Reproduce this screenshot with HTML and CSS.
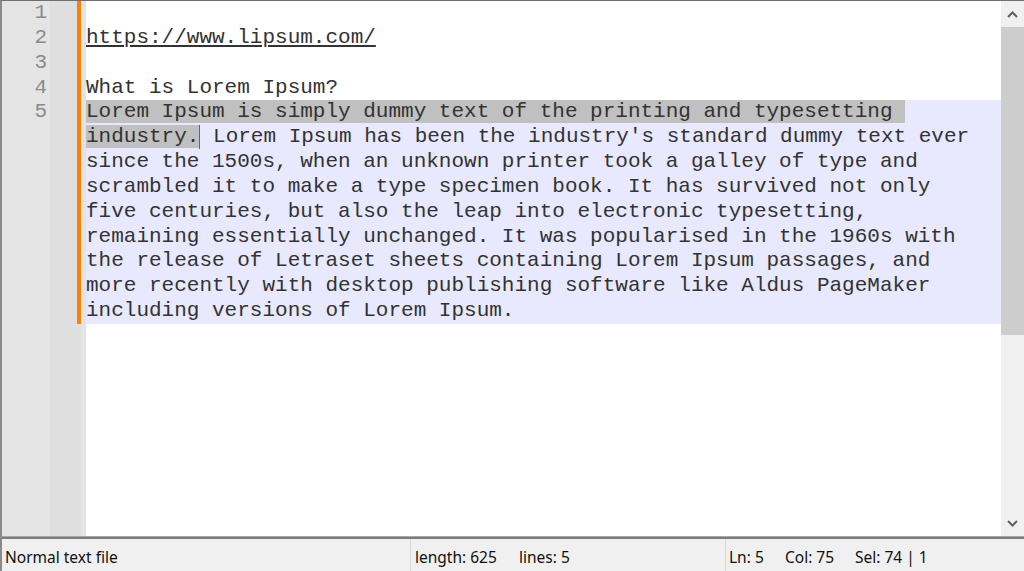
FILE: index.html
```html
<!DOCTYPE html>
<html lang="en">

<head>
    <meta charset="UTF-8">
    <meta name="viewport" content="width=device-width, initial-scale=1.0">
    <title>new 1 - Notepad++</title>
    <link rel="stylesheet" href="styles.css">
</head>

<body>
    <div class="window">
        <div class="editor">
            <div class="lines">
                <div class="row">
                    <div class="num">1</div>
                    <div class="fold"></div>
                    <div class="mark changed"></div>
                    <div class="pad"></div>
                    <div class="txt"><div class="wrap"> </div></div>
                </div>
                <div class="row">
                    <div class="num">2</div>
                    <div class="fold"></div>
                    <div class="mark changed"></div>
                    <div class="pad"></div>
                    <div class="txt"><div class="wrap"><span class="link">https://www.lipsum.com/</span></div></div>
                </div>
                <div class="row">
                    <div class="num">3</div>
                    <div class="fold"></div>
                    <div class="mark changed"></div>
                    <div class="pad"></div>
                    <div class="txt"><div class="wrap"> </div></div>
                </div>
                <div class="row">
                    <div class="num">4</div>
                    <div class="fold"></div>
                    <div class="mark changed"></div>
                    <div class="pad"></div>
                    <div class="txt"><div class="wrap">What is Lorem Ipsum?</div></div>
                </div>
                <div class="row">
                    <div class="num">5</div>
                    <div class="fold"></div>
                    <div class="mark changed"></div>
                    <div class="pad"></div>
                    <!-- wrapped line, one div per visual line -->
                    <div class="txt current">
                        <div class="wrap"><span class="sel">Lorem Ipsum is simply dummy text of the printing and typesetting </span></div>
                        <div class="wrap"><span class="sel">industry.</span><span class="caret"></span> Lorem Ipsum has been the industry's standard dummy text ever</div>
                        <div class="wrap">since the 1500s, when an unknown printer took a galley of type and</div>
                        <div class="wrap">scrambled it to make a type specimen book. It has survived not only</div>
                        <div class="wrap">five centuries, but also the leap into electronic typesetting,</div>
                        <div class="wrap">remaining essentially unchanged. It was popularised in the 1960s with</div>
                        <div class="wrap">the release of Letraset sheets containing Lorem Ipsum passages, and</div>
                        <div class="wrap">more recently with desktop publishing software like Aldus PageMaker</div>
                        <div class="wrap">including versions of Lorem Ipsum.</div>
                    </div>
                </div>
                <div class="row filler">
                    <div class="num"></div>
                    <div class="fold"></div>
                    <div class="mark"></div>
                    <div class="pad"></div>
                    <div class="txt"></div>
                </div>
            </div>
            <div class="vscroll">
                <div class="arrow">
                    <svg width="11" height="7" viewBox="0 0 11 7"><path d="M1 6 L5.5 1.5 L10 6" fill="none" stroke="#606060" stroke-width="2"/></svg>
                </div>
                <div class="thumb"></div>
                <div class="track"></div>
                <div class="arrow">
                    <svg width="11" height="7" viewBox="0 0 11 7"><path d="M1 1 L5.5 5.5 L10 1" fill="none" stroke="#606060" stroke-width="2"/></svg>
                </div>
            </div>
        </div>
        <div class="status">
            <div class="cell type">Normal text file</div>
            <div class="cell info"><span class="len">length: 625</span><span>lines: 5</span></div>
            <div class="cell pos"><span class="ln">Ln: 5</span><span class="col">Col: 75</span><span>Sel: 74 | 1</span></div>
        </div>
    </div>
</body>

</html>
```

FILE: styles.css
```css
* {
    box-sizing: border-box;
}

body {
    margin: 0;
    background-color: #fff;
}

.window {
    display: flex;
    flex-direction: column;
    width: 1024px;
    height: 571px;
    border-top: 1px solid #6f6f6f;
    border-left: 2px solid #8a8a8a;
}

/* editor */
.editor {
    display: flex;
    height: 536px;
    border-bottom: 1px solid #a8a8a8;
}

.lines {
    flex: 1;
    display: flex;
    flex-direction: column;
    font-family: "Liberation Mono", "Courier New", monospace;
    font-size: 21px;
    line-height: 24.85px;
    color: #333;
}

.row {
    display: flex;
}

.row.filler {
    flex: 1;
}

.num {
    width: 48px;
    padding-right: 3px;
    text-align: right;
    color: #8a8a8a;
    background-color: #e4e4e4;
}

.fold {
    width: 27px;
    background-color: #dfdfdf;
}

.mark {
    width: 4px;
    background-color: #dfdfdf;
}

.mark.changed {
    background-color: #ff8000;
}

.pad {
    width: 5px;
    background-color: #e3e3e3;
}

.txt {
    flex: 1;
    background-color: #fff;
}

.txt.current {
    background-color: #e8e8ff;
}

.wrap {
    height: 24.85px;
    white-space: pre;
}

.link {
    text-decoration: underline;
}

.sel {
    background-color: #c0c0c0;
}

.caret {
    display: inline-block;
    width: 0;
    height: 24px;
    vertical-align: top;
    border-left: 1px solid #8a3ee8;
}

/* scrollbar */
.vscroll {
    width: 23px;
    display: flex;
    flex-direction: column;
    background-color: #f0f0f0;
}

.arrow {
    height: 26px;
    display: flex;
    align-items: center;
    justify-content: center;
}

.thumb {
    height: 308px;
    background-color: #cdcdcd;
}

.track {
    flex: 1;
}

/* status bar */
.status {
    flex: 1;
    display: flex;
    border-top: 2px solid #7c7c7c;
    background-color: #f0f0f0;
    font-family: "Noto Sans", "Open Sans", sans-serif;
    font-size: 15.5px;
    line-height: 23px;
    color: #111;
}

.cell {
    padding-top: 7px;
    white-space: nowrap;
}

.type {
    width: 408px;
    padding-left: 3px;
}

.info {
    width: 315px;
    padding-left: 4px;
    border-left: 1px solid #d8d8d8;
}

.pos {
    flex: 1;
    padding-left: 3px;
    border-left: 1px solid #d8d8d8;
}

.len {
    display: inline-block;
    width: 104px;
}

.ln {
    display: inline-block;
    width: 56px;
}

.col {
    display: inline-block;
    width: 70px;
}
```
